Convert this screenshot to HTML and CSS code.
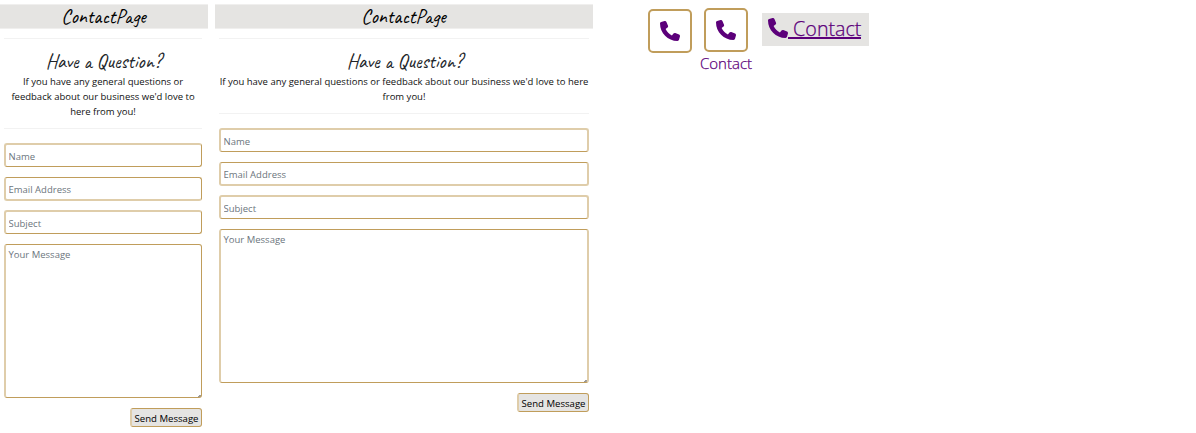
FILE: index.html
```html
<!DOCTYPE html>
<html lang="en">
<head>
<meta charset="utf-8">
<title>Contact Page</title>
<link rel="stylesheet" href="styles.css">
</head>
<body>
<svg class="defs" aria-hidden="true"><symbol id="phone" viewBox="0 0 512 512"><path d="M164.900 24.600c-7.700-18.600-28-28.500-47.400-23.200l-88 24C12.100 30.200 0 46 0 64c0 247.400 200.600 448 448 448 18 0 33.800-12.100 38.600-29.500l24-88c5.300-19.400-4.600-39.700-23.200-47.400l-96-40c-16.300-6.800-35.200-2.100-46.300 11.600L304.700 368C234.300 334.700 177.300 277.700 144 207.300L193.300 167c13.700-11.200 18.400-30 11.600-46.300l-40-96z"/></symbol></svg>
<main class="board">
  <section class="panel narrow">
    <h1 class="title">ContactPage</h1>
    <div class="content">
      <header class="intro">
        <h2 class="question">Have a Question?</h2>
        <p>If you have any general questions or<br>feedback about our business we'd love to<br>here from you!</p>
      </header>
      <form class="form">
        <input class="field" type="text" placeholder="Name">
        <input class="field low" type="email" placeholder="Email Address">
        <input class="field" type="text" placeholder="Subject">
        <textarea class="field low message" placeholder="Your Message"></textarea>
        <button class="send" type="button">Send Message</button>
      </form>
    </div>
  </section>
  <section class="panel wide">
    <h1 class="title">ContactPage</h1>
    <div class="content">
      <header class="intro">
        <h2 class="question">Have a Question?</h2>
        <p>If you have any general questions or feedback about our business we'd love to here<br>from you!</p>
      </header>
      <form class="form">
        <input class="field" type="text" placeholder="Name">
        <input class="field low" type="email" placeholder="Email Address">
        <input class="field" type="text" placeholder="Subject">
        <textarea class="field low message" placeholder="Your Message"></textarea>
        <button class="send" type="button">Send Message</button>
      </form>
    </div>
  </section>
  <nav class="links">
    <a class="box first"><svg class="icon"><use href="#phone"/></svg></a>
    <a class="stack"><span class="box"><svg class="icon"><use href="#phone"/></svg></span><span class="label">Contact</span></a>
    <a class="tag"><svg class="icon"><use href="#phone"/></svg><span class="tag-text">&nbsp;Contact</span></a>
  </nav>
</main>
</body>
</html>
```
FILE: styles.css
```css
* { box-sizing: border-box; }
body { margin: 0; background: #fff; color: #212529; font-family: "Open Sans", sans-serif; }
.defs { display: none; }
.board { display: flex; align-items: flex-start; height: 433px; overflow: hidden; }
.panel { padding-top: 4px; }
.narrow { width: 208px; margin-right: 7px; }
.wide { width: 378px; }
.title { margin: 0; height: 25px; padding-right: 1px; background: #e5e4e2; border-top: 1px solid #f0efee; border-bottom: 1px solid #f0efee; text-align: center; color: #000; font: 400 20px/23px Caveat, cursive; }
.content { margin: 9px 6px 0 4px; width: 198px; }
.wide .content { width: 370px; }
.intro { height: 91px; border-top: 1px solid #f2f2f2; border-bottom: 1px solid #f2f2f2; text-align: center; }
.wide .intro { height: 76px; }
.question { margin: 0; padding: 12px 0 0 1px; height: 35px; color: #212529; font: 400 20px/22px Caveat, cursive; }
.intro p { margin: 0; font-size: 9.500px; line-height: 15px; color: #111; white-space: nowrap; }
.form { display: flex; flex-direction: column; margin-top: 14px; }
.field { display: block; width: 100%; height: 24px; margin: 0 0 10px; padding: 2px 3px 0 2.500px; border: 1px solid #c09d5b; border-top: 2px solid #dfcdaa; border-left: 2px solid #dfcdaa; border-radius: 3px; background: #fff; font: 9.500px/15px "Open Sans", sans-serif; outline: 0; }
.field.low { border-top: 1px solid #c09d5b; border-bottom: 2px solid #dfcdaa; margin-bottom: 9px; }
.wide .field { border-right: 2px solid #dfcdaa; }
.field::placeholder { color: #6c757d; opacity: 1; }
.form .message { height: 154px; margin-bottom: 10px; padding-top: 2px; border-bottom: 1px solid #c09d5b; resize: none; background: linear-gradient(135deg, transparent 50%, #999 50%) right bottom / 3px 3px no-repeat; }
.send { align-self: flex-end; width: 72px; height: 19px; padding: 1px 0 0; border: 1px solid #c09d5b; border-left: 2px solid #dfcdaa; border-radius: 3px; background: #e5e4e2; color: #000; font: 9.600px/15px "Open Sans", sans-serif; white-space: nowrap; }
.links { display: flex; align-items: flex-start; margin-left: 55px; color: #5c007a; }
.box { display: flex; align-items: center; justify-content: center; width: 44px; height: 44px; border: 2px solid #c09d5b; border-radius: 5px; }
.first { margin-top: 9px; }
.icon { display: block; width: 20px; height: 20px; fill: #5c007a; }
.stack { display: flex; flex-direction: column; align-items: center; width: 52px; margin: 8px 0 0 8px; }
.label { font: 300 15px/22px "Open Sans", sans-serif; -webkit-text-stroke: .25px #5c007a; }
.tag { display: flex; width: 107px; height: 33px; margin: 13px 0 0 10px; padding: 5px 0 0 6px; background: #e5e4e2; }
.tag-text { height: 21px; border-bottom: 2px solid #5c007a; font: 300 19.700px/22px "Open Sans", sans-serif; -webkit-text-stroke: .25px #5c007a; white-space: nowrap; }
```
